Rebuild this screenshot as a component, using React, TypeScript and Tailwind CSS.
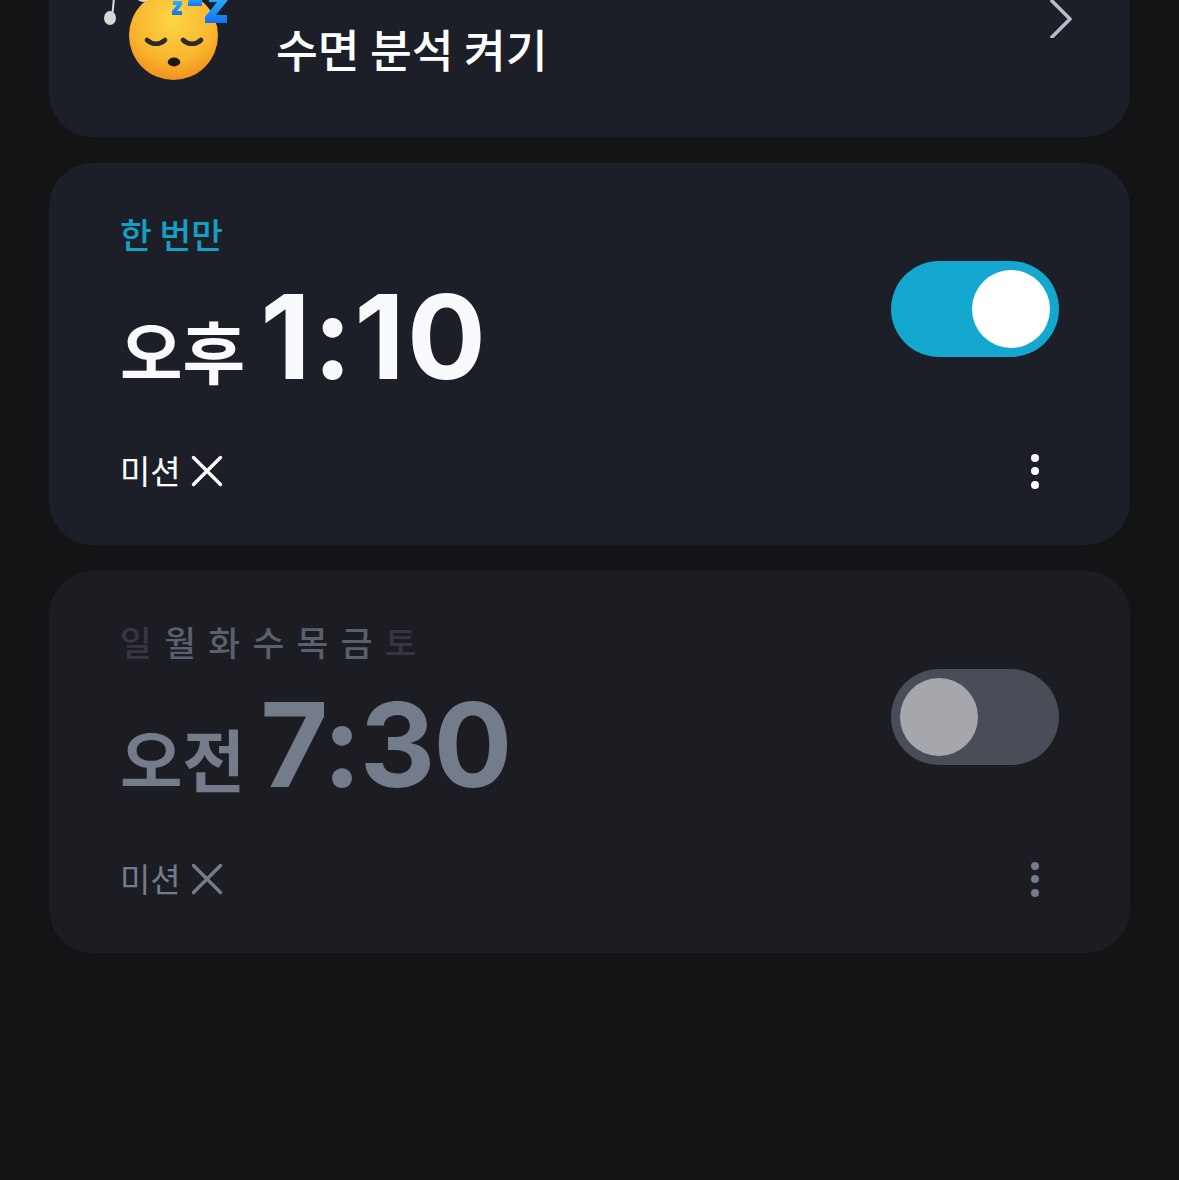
import React from "react";

const SleepEmoji = () => (
  <svg width="140" height="90" viewBox="0 0 140 90" className="shrink-0">
    <defs>
      <radialGradient id="face" cx="50%" cy="32%" r="72%">
        <stop offset="0%" stopColor="#fdd548" />
        <stop offset="65%" stopColor="#f9b52c" />
        <stop offset="100%" stopColor="#f08a1c" />
      </radialGradient>
      <linearGradient id="zed" x1="0" y1="0" x2="0" y2="1">
        <stop offset="0%" stopColor="#2bb4fb" />
        <stop offset="100%" stopColor="#1273ee" />
      </linearGradient>
    </defs>
    <circle cx="73.5" cy="35.5" r="44.5" fill="url(#face)" />
    <path d="M47 40c5 5 13 5 18 0M83 40c5 5 13 5 18 0" fill="none" stroke="#2e2a2a" strokeWidth="4.6" strokeLinecap="round" />
    <ellipse cx="74" cy="62" rx="6.3" ry="4.4" fill="#1f1512" />
    <path d="M14 -2l-1.5 15" stroke="#dcdcdc" strokeWidth="2" fill="none" />
    <ellipse cx="10" cy="18" rx="6" ry="7" fill="#d6d6d6" />
    <ellipse cx="43" cy="-3" rx="6" ry="5" fill="#d6d6d6" />
    <path d="M73 1h9v4l-5 6h5v4H72v-4l5-6h-4z" fill="url(#zed)" />
    <path d="M90 -3h12v9H88V2z" fill="url(#zed)" />
    <path d="M109 -5h19v5l-12 15h11v8h-22v-6l12-15h-8z" fill="url(#zed)" />
  </svg>
);

const Toggle = ({ on }: { on: boolean }) => (
  <div className={`flex h-[96px] w-[168px] items-center rounded-full p-[9px] ${on ? "justify-end bg-[#14a7cf]" : "justify-start bg-[#494d58]"}`}>
    <div className={`h-[78px] w-[78px] rounded-full ${on ? "bg-white" : "bg-[#a6a7ad]"}`} />
  </div>
);

const CloseMark = ({ color }: { color: string }) => (
  <svg width="32" height="32" viewBox="0 0 32 32" className="ml-[10px]">
    <path d="M2.5 2.5l27 27M29.5 2.5l-27 27" stroke={color} strokeWidth="3.4" strokeLinecap="round" />
  </svg>
);

const Dots = ({ color }: { color: string }) => (
  <div className="flex w-[48px] flex-col items-center gap-[5.5px]">
    <span className={`h-[8px] w-[8px] rounded-full ${color}`} />
    <span className={`h-[8px] w-[8px] rounded-full ${color}`} />
    <span className={`h-[8px] w-[8px] rounded-full ${color}`} />
  </div>
);

const days = [
  { d: "일", on: false },
  { d: "월", on: true },
  { d: "화", on: true },
  { d: "수", on: true },
  { d: "목", on: true },
  { d: "금", on: true },
  { d: "토", on: false },
];

const kr = { fontFamily: '"Noto Sans CJK KR", sans-serif' };

const AlarmCard = ({
  on,
  meridiem,
  time,
  label,
}: {
  on: boolean;
  meridiem: string;
  time: string;
  label: React.ReactNode;
}) => (
  <div className={`flex h-[382px] flex-col rounded-[44px] px-[71px] ${on ? "bg-[#1c1f28]" : "bg-[#1b1d23]"}`}>
    <div className="mt-[48px] mb-[1px] h-[44px] text-[34.5px] font-medium leading-[44px]">{label}</div>
    <div className="flex h-[143px] items-start justify-between">
      <div className={`mt-[19px] flex h-[124px] items-baseline font-['Inter',sans-serif] ${on ? "text-[#f8fafe]" : "text-[#747b8a]"}`}>
        <span className="text-[68px] font-semibold leading-[124px]" style={kr}>{meridiem}</span>
        <span className={`ml-[15px] text-[117px] font-bold leading-[124px] ${on ? "tracking-[0.02em]" : "tracking-[-0.015em]"}`}>{time}</span>
      </div>
      <div className="mt-[5px]">
        <Toggle on={on} />
      </div>
    </div>
    <div className="mt-[50px] flex h-[44px] items-center justify-between">
      <div className={`flex h-[44px] items-center text-[33px] leading-[44px] ${on ? "text-white" : "text-[#747b8a]"}`} style={kr}>
        <span className="-mt-[2px]">미션</span>
        <CloseMark color={on ? "#ffffff" : "#747b8a"} />
      </div>
      <Dots color={on ? "bg-white" : "bg-[#747b8a]"} />
    </div>
  </div>
);

export default function App() {
  return (
    <div className="flex h-[1180px] w-[1179px] flex-col gap-[26px] overflow-hidden bg-[#131416] px-[49px]" style={kr}>
      <div className="flex h-[137px] shrink-0 items-start rounded-b-[44px] bg-[#1c1f28] pl-[51px] pr-[56px]">
        <SleepEmoji />
        <div className="ml-[36px] mt-[17px] text-[45.5px] font-medium leading-[62px] text-white">수면 분석 켜기</div>
        <svg width="26" height="38" viewBox="0 0 26 38" className="ml-auto">
          <path d="M4 1l18 18L4 37" fill="none" stroke="#b8bcc6" strokeWidth="3.6" strokeLinecap="round" strokeLinejoin="round" />
        </svg>
      </div>
      <AlarmCard on meridiem="오후" time="1:10" label={<span className="text-[#14a0c4]">한 번만</span>} />
      <AlarmCard
        on={false}
        meridiem="오전"
        time="7:30"
        label={
          <div className="flex gap-[12.4px]">
            {days.map((x) => (
              <span key={x.d} className={x.on ? "text-[#5b606e]" : "text-[#343742]"}>{x.d}</span>
            ))}
          </div>
        }
      />
    </div>
  );
}
